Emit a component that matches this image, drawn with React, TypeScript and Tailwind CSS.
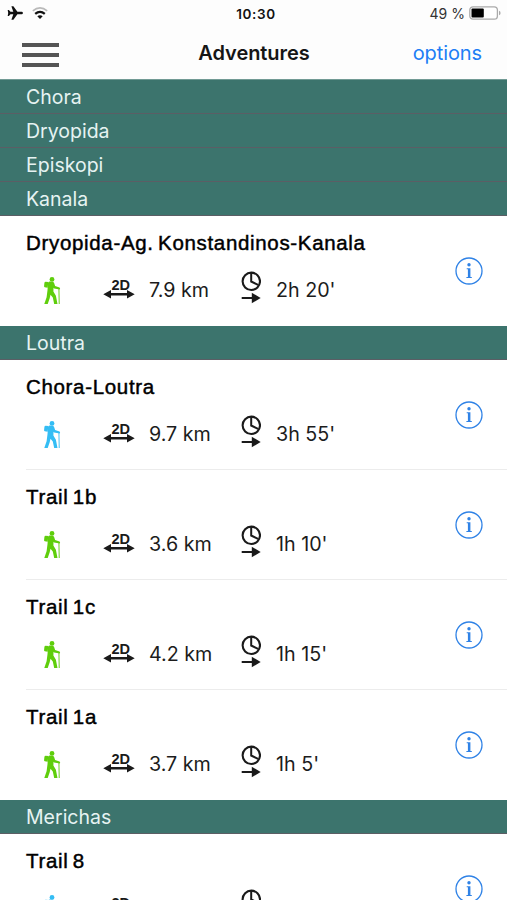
import { clsx } from "clsx";

type Trail = {
  name: string;
  distance: string;
  duration: string;
  level: "easy" | "medium";
};

type Region = {
  name: string;
  trails: Trail[];
};

const regions: Region[] = [
  { name: "Chora", trails: [] },
  { name: "Dryopida", trails: [] },
  { name: "Episkopi", trails: [] },
  {
    name: "Kanala",
    trails: [
      { name: "Dryopida-Ag. Konstandinos-Kanala", distance: "7.9 km", duration: "2h 20'", level: "easy" },
    ],
  },
  {
    name: "Loutra",
    trails: [
      { name: "Chora-Loutra", distance: "9.7 km", duration: "3h 55'", level: "medium" },
      { name: "Trail 1b", distance: "3.6 km", duration: "1h 10'", level: "easy" },
      { name: "Trail 1c", distance: "4.2 km", duration: "1h 15'", level: "easy" },
      { name: "Trail 1a", distance: "3.7 km", duration: "1h 5'", level: "easy" },
    ],
  },
  {
    name: "Merichas",
    trails: [{ name: "Trail 8", distance: "", duration: "", level: "medium" }],
  },
];

function HikerIcon({ level }: { level: Trail["level"] }) {
  return (
    <svg
      viewBox="0 0 18 28"
      className={clsx("h-7 w-[18px]", level === "easy" ? "text-[#5fce0c]" : "text-[#34bdf4]")}
      fill="currentColor"
    >
      <g transform="translate(.9 0)">
        <circle cx="8.1" cy="2.4" r="2.4" />
        <path d="M1.8 4.8 4.4 5 3.8 10.8.8 10.3Q0 10.1.2 9.1L.5 5.9Q.7 4.8 1.8 4.8Z" />
        <path d="M5.6 4.6 8.8 4.7Q9.9 5 10.3 6.3L11.2 9.1 15.6 10.6Q16.7 11.2 15.9 12.5L10.2 11.4 9.6 10.8 9.5 14.6 12 18.7 13.6 27H10.3L8.9 20.6 6.6 17.7 5.8 21.2 3.8 27H.4L2.7 20.2 3.6 13.2 4.1 6.1Q4.4 4.8 5.6 4.6Z" />
        <path d="M15 12 15.4 27" stroke="currentColor" strokeWidth="1.3" opacity="0.7" />
      </g>
    </svg>
  );
}

function DistanceIcon() {
  return (
    <svg viewBox="0 0 32 24" className="h-6 w-8 text-[#1a1a1a]" fill="currentColor">
      <text x="8.4" y="12.6" fontSize="14.5" fontWeight="700" textLength="18.6" lengthAdjust="spacingAndGlyphs" className="font-['Liberation_Sans',sans-serif]">
        2D
      </text>
      <path d="M.3 17.2 8 13V15.9H24V13L31.7 17.2 24 21.4V18.5H8V21.4Z" />
    </svg>
  );
}

function DurationIcon() {
  return (
    <svg viewBox="0 0 20 34" className="h-[34px] w-5 text-[#1a1a1a]" fill="none" stroke="currentColor">
      <circle cx="10.3" cy="10.3" r="8.7" strokeWidth="2.1" />
      <path d="M10.2 2V10.5L17 13.8" strokeWidth="2" />
      <path d="M.7 27H12" strokeWidth="2" />
      <path d="M10.8 21.7 19.7 27 10.8 32.3Z" fill="currentColor" stroke="none" />
    </svg>
  );
}

function InfoIcon() {
  return (
    <svg viewBox="0 0 28 28" className="size-7 text-[#2f82e6]" fill="currentColor">
      <circle cx="14" cy="14" r="13" fill="none" stroke="currentColor" strokeWidth="1.3" />
      <circle cx="14" cy="7.7" r="1.7" />
      <path d="M11.7 11.2H15.4V20H16.8V21.1H11.4V20H12.9V12.3H11.7Z" />
    </svg>
  );
}

function StatusBar() {
  return (
    <div className="grid h-7 grid-cols-3 items-center pl-[7px] pr-1.5 text-[#111]">
      <div className="flex items-center gap-[9px]">
        <svg viewBox="0 0 16 14" className="h-3.5 w-4 -translate-y-px" fill="currentColor">
          <path d="M15.9 7Q15.9 8.2 14.7 8.2H10.4L6.4 13.7H4.4L6.3 8.2H3.5L1.9 10.1H.7L1.2 7 .7 3.9H1.9L3.5 5.8H6.3L4.4.3H6.4L10.4 5.8H14.7Q15.9 5.8 15.9 7Z" />
        </svg>
        <svg viewBox="0 0 16 12" className="h-3 w-4 -translate-y-px" fill="none" stroke="currentColor">
          <path d="M.8 3.8Q8-2 15.2 3.8" strokeWidth="1.7" className="text-[#b9b9b9]" />
          <path d="M3.2 6.9Q8 2.9 12.8 6.9" strokeWidth="2.3" />
          <path d="M5.3 9.3Q8 7 10.7 9.3L8 12Z" fill="currentColor" stroke="none" />
        </svg>
      </div>
      <div className="pl-1 text-center text-[13.5px] font-semibold tracking-[0.6px]">10:30</div>
      <div className="flex items-center justify-end gap-1">
        <span className="-translate-y-px whitespace-nowrap text-[14px] text-[#333]">49 %</span>
        <svg viewBox="0 0 32 14" className="h-3.5 w-8 -translate-y-px">
          <rect x="0.8" y="0.8" width="27.6" height="12.4" rx="3.2" fill="#fff" stroke="#aaa" strokeWidth="1.3" />
          <rect x="2.5" y="2.5" width="12.3" height="9" rx="1" fill="#000" />
          <path d="M30 4.7Q31.6 5.3 31.6 7T30 9.3Z" fill="#aaa" />
        </svg>
      </div>
    </div>
  );
}

function NavBar() {
  return (
    <div className="grid h-[51px] grid-cols-3 items-center pl-[22px] pr-[25px]">
      <button className="flex w-[37px] flex-col gap-1.5 pt-0.5" aria-label="Menu">
        <span className="h-1 bg-[#555]" />
        <span className="h-1 bg-[#555]" />
        <span className="h-1 bg-[#555]" />
      </button>
      <h1 className="pb-0.5 pl-1 text-center text-[20px] font-semibold tracking-[-0.05px] text-[#151515]">Adventures</h1>
      <button className="pb-0.5 text-right text-[20px] tracking-[-0.1px] text-[#207df5]">options</button>
    </div>
  );
}

function RegionHeader({ name, first }: { name: string; first: boolean }) {
  return (
    <h2
      className={clsx(
        "flex items-center border-b border-[#5b5e65] bg-[#3c746d] pl-[26px] pt-0.5 text-[19.5px] text-[#e6f3f2]",
        first ? "h-[35px] border-t border-t-[#719a94]" : "h-[34px]",
      )}
    >
      {name}
    </h2>
  );
}

function TrailRow({ trail, last }: { trail: Trail; last: boolean }) {
  return (
    <li className="flex h-[110px] justify-between pl-[26px]">
      <div className={clsx("flex grow flex-col", !last && "border-b border-[#ececec]")}>
        <h3 className="mt-[14px] h-[26px] whitespace-nowrap font-['Liberation_Sans',sans-serif] text-[20.5px] leading-[26px] tracking-[0.67px] text-black [-webkit-text-stroke:0.45px_black] [word-spacing:-2px]">
          {trail.name}
        </h3>
        <div className="mt-[13px] flex h-[38px] items-start text-[19.7px] leading-[42px] text-[#1c1c1c]">
          <div className="w-[77px] pl-[17px] pt-2">
            <HikerIcon level={trail.level} />
          </div>
          <div className="w-[46px] pt-2">
            <DistanceIcon />
          </div>
          <span className="w-[92px] whitespace-nowrap">{trail.distance}</span>
          <div className="w-[35px] pt-0.5">
            <DurationIcon />
          </div>
          <span className="whitespace-nowrap">{trail.duration}</span>
        </div>
      </div>
      <button className={clsx("flex w-[66px] items-start pl-3.5 pt-[41px]", !last && "border-b border-[#ececec]")} aria-label={`About ${trail.name}`}>
        <InfoIcon />
      </button>
    </li>
  );
}

export default function App() {
  return (
    <main className="h-[900px] w-[507px] overflow-hidden bg-white font-['Inter',sans-serif]">
      <header className="h-[79px] bg-[#fdfdfd]">
        <StatusBar />
        <NavBar />
      </header>
      {regions.map((region, index) => (
        <section key={region.name}>
          <RegionHeader name={region.name} first={index === 0} />
          <ul>
            {region.trails.map((trail, i) => (
              <TrailRow key={trail.name} trail={trail} last={i === region.trails.length - 1} />
            ))}
          </ul>
        </section>
      ))}
    </main>
  );
}
